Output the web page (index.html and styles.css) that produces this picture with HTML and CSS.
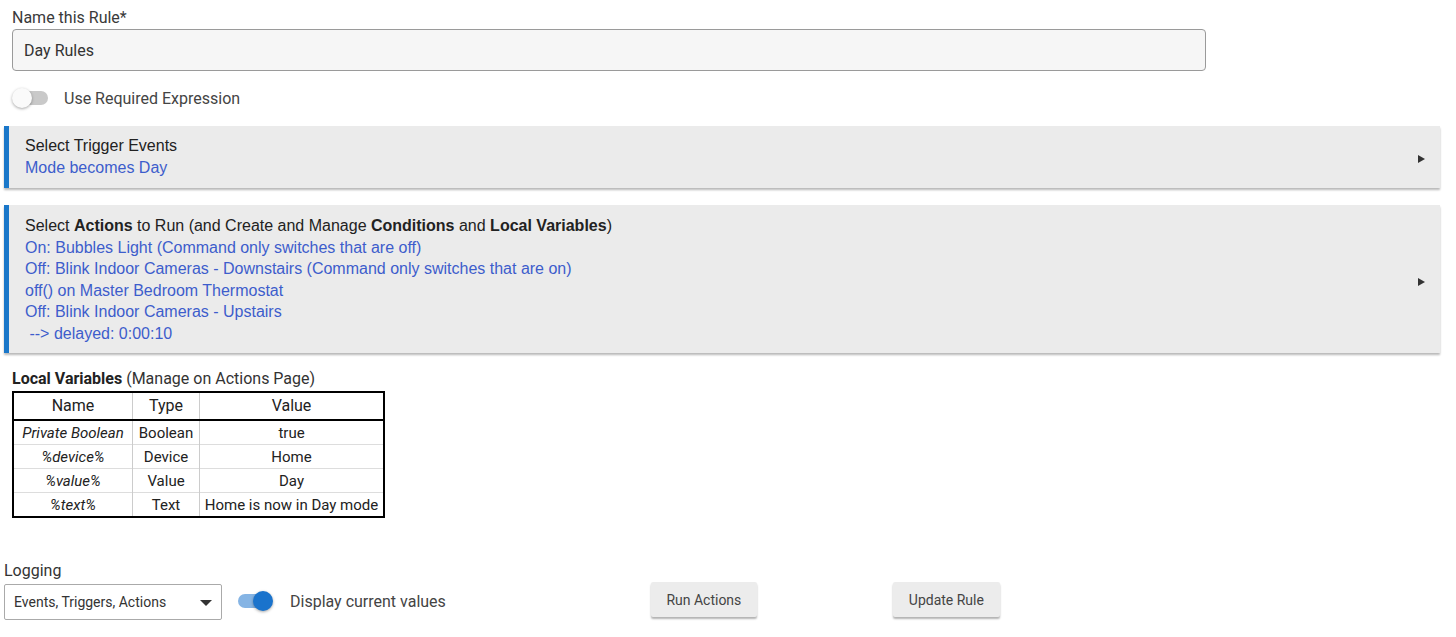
FILE: index.html
```html
<!DOCTYPE html>
<html lang="en">
<head>
    <meta charset="UTF-8">
    <meta name="viewport" content="width=device-width, initial-scale=1.0">
    <title>Day Rules</title>
    <link rel="stylesheet" href="styles.css">
</head>
<body>
    <div class="field">
        <label class="field-label" for="ruleName">Name this Rule*</label>
        <input class="text-input" type="text" id="ruleName" value="Day Rules">
    </div>

    <div class="switch-row">
        <span class="switch"><span class="knob"></span></span>
        <span class="switch-label">Use Required Expression</span>
    </div>

    <div class="card">
        <div class="card-body">
            <div class="card-title">Select Trigger Events</div>
            <div class="card-line">Mode becomes Day</div>
        </div>
        <span class="arrow"></span>
    </div>

    <div class="card">
        <div class="card-body">
            <div class="card-title">Select <b>Actions</b> to Run (and Create and Manage <b>Conditions</b> and <b>Local Variables</b>)</div>
            <div class="card-line">On: Bubbles Light (Command only switches that are off)</div>
            <div class="card-line">Off: Blink Indoor Cameras - Downstairs (Command only switches that are on)</div>
            <div class="card-line">off() on Master Bedroom Thermostat</div>
            <div class="card-line">Off: Blink Indoor Cameras - Upstairs</div>
            <div class="card-line">&nbsp;--&gt; delayed: 0:00:10</div>
        </div>
        <span class="arrow"></span>
    </div>

    <div class="vars">
        <div class="vars-title"><b>Local Variables</b> (Manage on Actions Page)</div>
        <table class="vars-table">
            <thead>
                <tr><th class="col-name">Name</th><th class="col-type">Type</th><th>Value</th></tr>
            </thead>
            <tbody>
                <tr><td><i>Private Boolean</i></td><td>Boolean</td><td>true</td></tr>
                <tr><td><i>%device%</i></td><td>Device</td><td>Home</td></tr>
                <tr><td><i>%value%</i></td><td>Value</td><td>Day</td></tr>
                <tr><td><i>%text%</i></td><td>Text</td><td>Home is now in Day mode</td></tr>
            </tbody>
        </table>
    </div>

    <div class="footer">
        <div class="logging">
            <div class="logging-label">Logging</div>
            <div class="select">
                <span>Events, Triggers, Actions</span>
                <span class="caret"></span>
            </div>
        </div>
        <div class="switch-row on">
            <span class="switch"><span class="knob"></span></span>
            <span class="switch-label">Display current values</span>
        </div>
        <button class="btn btn-run">Run Actions</button>
        <button class="btn btn-update">Update Rule</button>
    </div>
</body>
</html>
```

FILE: styles.css
```css
body { margin: 0; padding: 0 16px 0 4px; font-family: Roboto, "Liberation Sans", sans-serif; color: #333; background: #fff; }

.field { padding: 8px 0 0 8px; }
.field-label { display: block; font-size: 16px; line-height: 19px; color: #3a3a3a; margin-bottom: 2px; }
.text-input {
    display: block;
    box-sizing: border-box;
    width: 1194px;
    height: 42px;
    padding: 0 11px;
    font-family: Roboto, sans-serif;
    font-size: 16px;
    color: #333;
    background: #f6f6f6;
    border: 1px solid #9a9a9a;
    border-radius: 4px;
}

.switch-row { display: flex; align-items: center; height: 24px; margin: 15px 0 0 8px; }
.switch { position: relative; width: 36px; height: 14px; }
.switch::before { content: ""; position: absolute; left: 2px; right: 0; top: 0; bottom: 0; background: #c9c9c9; border-radius: 7px; }
.knob { position: absolute; left: 0; top: -3px; width: 20px; height: 20px; border-radius: 50%; background: #fafafa; box-shadow: 0 1px 3px rgba(0,0,0,0.35); }
.switch-label { margin-left: 16px; font-size: 16px; color: #444; }

.switch-row.on { margin: 15px 0 0 16px; }
.switch-row.on .switch { width: 35px; }
.switch-row.on .switch::before { background: #85b4e4; left: 0; right: 2px; }
.switch-row.on .knob { left: auto; right: 0; background: #1a73cc; }
.switch-row.on .switch-label { margin-left: 17px; }

.card {
    display: flex;
    align-items: center;
    margin-top: 16px;
    padding: 9px 15px 10px 16px;
    background: #ebebeb;
    border-left: 5px solid #1a77c9;
    box-shadow: 0 2px 2px rgba(0,0,0,0.28);
    font-family: "Liberation Sans", Arial, sans-serif;
    font-size: 16px;
    line-height: 21.5px;
}
.card + .card { margin-top: 17px; padding: 10px 15px 9px 16px; }
.card-body { flex: 1; }
.card-title { color: #222; }
.card-line { color: #3d5dcc; white-space: pre; }
.arrow { width: 0; height: 0; margin-top: 4px; border-top: 4px solid transparent; border-bottom: 4px solid transparent; border-left: 7px solid #333; }

.vars { margin: 17px 0 0 8px; }
.vars-title { font-size: 16px; line-height: 18px; color: #333; margin-bottom: 3px; }
.vars-title b { font-weight: 700; color: #222; }
.vars-table { width: 373px; border-collapse: collapse; border: 2px solid #000; font-size: 15px; line-height: 20px; color: #222; }
.vars-table th { font-weight: 400; font-size: 16px; height: 26px; padding: 0; border-bottom: 2px solid #000; border-left: 1px solid #ccc; }
.vars-table td { height: 23px; padding: 0 4px; text-align: center; white-space: nowrap; border-top: 1px solid #ddd; border-left: 1px solid #ccc; }
.vars-table th:first-child, .vars-table td:first-child { border-left: none; }
.vars-table thead + tbody tr:first-child td { border-top: none; }
.col-name { width: 118px; }
.col-type { width: 66px; }

.footer { display: flex; align-items: flex-end; margin-top: 43px; padding-bottom: 18px; }
.logging-label { font-size: 16px; line-height: 19px; color: #333; margin-bottom: 4px; }
.select {
    box-sizing: border-box;
    width: 218px;
    height: 36px;
    display: flex;
    align-items: center;
    justify-content: space-between;
    padding: 0 9px 0 9px;
    border: 1px solid #aaa;
    border-radius: 2px;
    font-size: 14px;
    color: #333;
}
.caret { width: 0; height: 0; border-left: 6px solid transparent; border-right: 6px solid transparent; border-top: 6px solid #333; margin-top: 2px; }
.footer .switch-row.on { margin-bottom: 7px; }

.btn {
    height: 35px;
    width: 107px;
    margin-bottom: 3px;
    background: #ececec;
    border: none;
    border-radius: 2px;
    box-shadow: 0 2px 2px rgba(0,0,0,0.3);
    font-family: Roboto, sans-serif;
    font-size: 14px;
    color: #444;
}
.btn-run { width: 106px; margin-left: 205px; }
.btn-update { margin-left: 136px; }
```
